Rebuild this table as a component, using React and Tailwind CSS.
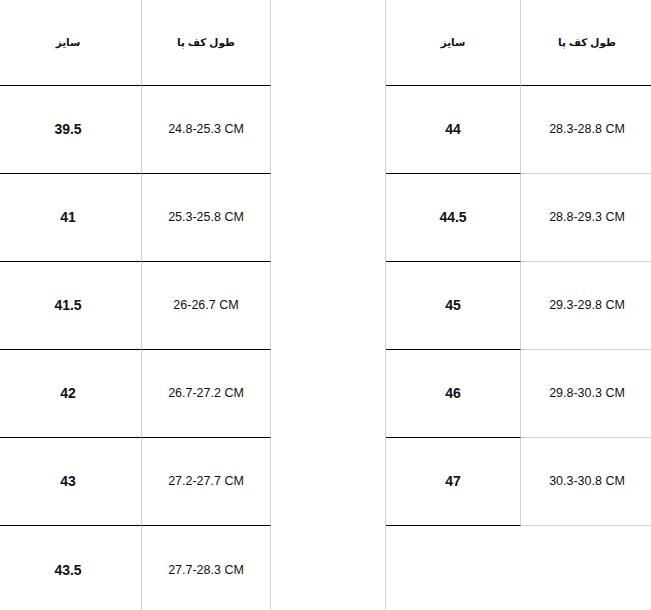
import React from "react";

const G = "border-[#d4d4d4]";

function Cell({ children, className = "" }) {
  return (
    <div className={"flex items-center justify-center box-border " + className}>
      {children}
    </div>
  );
}

const left = [
  ["39.5", "24.8-25.3 CM"],
  ["41", "25.3-25.8 CM"],
  ["41.5", "26-26.7 CM"],
  ["42", "26.7-27.2 CM"],
  ["43", "27.2-27.7 CM"],
  ["43.5", "27.7-28.3 CM"],
];

const right = [
  ["44", "28.3-28.8 CM"],
  ["44.5", "28.8-29.3 CM"],
  ["45", "29.3-29.8 CM"],
  ["46", "29.8-30.3 CM"],
  ["47", "30.3-30.8 CM"],
];

export default function App() {
  return (
    <div
      className="flex w-[651px] h-[610px] overflow-hidden bg-white text-[#111]"
      style={{ fontFamily: '"Liberation Sans", "DejaVu Sans", Arial, sans-serif' }}
    >
      {/* Left table */}
      <div className="w-[271px] shrink-0 grid grid-cols-[142px_129px] content-start">
        <Cell className={"h-[86px] border-b border-r border-b-black pr-[5px] " + G}>
          <span className="text-[10.5px] font-bold" dir="rtl">سایز</span>
        </Cell>
        <Cell className={"h-[86px] border-b border-r border-b-black " + G}>
          <span className="text-[10.5px] font-bold" dir="rtl">طول کف پا</span>
        </Cell>
        {left.map(([s, cm], i) => {
          const last = i === left.length - 1;
          const rowCls = last ? "h-[88px] border-r " : "h-[88px] border-b border-r border-b-black ";
          return (
            <React.Fragment key={s}>
              <Cell className={rowCls + "pr-[5px] " + G}>
                <span className="text-[14px] font-bold">{s}</span>
              </Cell>
              <Cell className={rowCls + G}>
                <span className="text-[12.5px]">{cm}</span>
              </Cell>
            </React.Fragment>
          );
        })}
      </div>

      {/* Gap */}
      <div className="w-[114px] shrink-0" />

      {/* Right table */}
      <div className={"w-[268px] shrink-0 h-full border-l " + G}>
        <div className="grid grid-cols-[135px_132px]">
          <Cell className={"h-[86px] border-b border-r border-b-black " + G}>
            <span className="text-[10.5px] font-bold" dir="rtl">سایز</span>
          </Cell>
          <Cell className="h-[86px] border-b border-black">
            <span className="text-[10.5px] font-bold" dir="rtl">طول کف پا</span>
          </Cell>
          {right.map(([s, cm]) => (
            <React.Fragment key={s}>
              <Cell className={"h-[88px] border-b border-r border-b-black " + G}>
                <span className="text-[14px] font-bold">{s}</span>
              </Cell>
              <Cell className={"h-[88px] border-b " + G}>
                <span className="text-[12.5px]">{cm}</span>
              </Cell>
            </React.Fragment>
          ))}
        </div>
      </div>
    </div>
  );
}
